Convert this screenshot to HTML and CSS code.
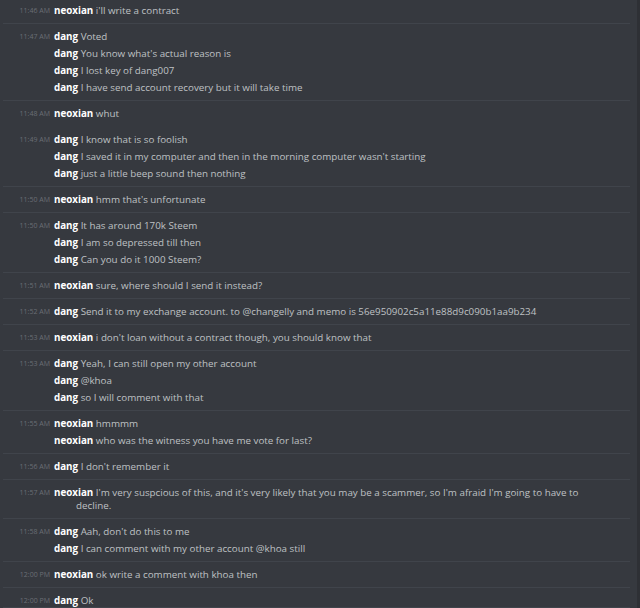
FILE: index.html
```html
<!DOCTYPE html>
<html lang="en">
<head>
  <meta charset="UTF-8">
  <title>Chat Log</title>
  <link rel="stylesheet" href="styles.css">
</head>
<body>

  <div class="window">
    <!-- Message log -->
    <div class="log">

      <div class="group">
        <div class="line"><span class="time">11:46 AM</span><p class="msg"><b class="name">neoxian</b> i'll write a contract</p></div>
      </div>

      <div class="group">
        <div class="line"><span class="time">11:47 AM</span><p class="msg"><b class="name">dang</b> Voted</p></div>
        <div class="line"><span class="time"></span><p class="msg"><b class="name">dang</b> You know what's actual reason is</p></div>
        <div class="line"><span class="time"></span><p class="msg"><b class="name">dang</b> I lost key of dang007</p></div>
        <div class="line"><span class="time"></span><p class="msg"><b class="name">dang</b> I have send account recovery but it will take time</p></div>
      </div>

      <div class="group no-rule">
        <div class="line"><span class="time">11:48 AM</span><p class="msg"><b class="name">neoxian</b> whut</p></div>
      </div>

      <div class="group">
        <div class="line"><span class="time">11:49 AM</span><p class="msg"><b class="name">dang</b> I know that is so foolish</p></div>
        <div class="line"><span class="time"></span><p class="msg"><b class="name">dang</b> I saved it in my computer and then in the morning computer wasn't starting</p></div>
        <div class="line"><span class="time"></span><p class="msg"><b class="name">dang</b> just a little beep sound then nothing</p></div>
      </div>

      <div class="group">
        <div class="line"><span class="time">11:50 AM</span><p class="msg"><b class="name">neoxian</b> hmm that's unfortunate</p></div>
      </div>

      <div class="group">
        <div class="line"><span class="time">11:50 AM</span><p class="msg"><b class="name">dang</b> It has around 170k Steem</p></div>
        <div class="line"><span class="time"></span><p class="msg"><b class="name">dang</b> I am so depressed till then</p></div>
        <div class="line"><span class="time"></span><p class="msg"><b class="name">dang</b> Can you do it 1000 Steem?</p></div>
      </div>

      <div class="group">
        <div class="line"><span class="time">11:51 AM</span><p class="msg"><b class="name">neoxian</b> sure, where should I send it instead?</p></div>
      </div>

      <div class="group">
        <div class="line"><span class="time">11:52 AM</span><p class="msg"><b class="name">dang</b> Send it to my exchange account. to @changelly and memo is 56e950902c5a11e88d9c090b1aa9b234</p></div>
      </div>

      <div class="group">
        <div class="line"><span class="time">11:53 AM</span><p class="msg"><b class="name">neoxian</b> i don't loan without a contract though, you should know that</p></div>
      </div>

      <div class="group">
        <div class="line"><span class="time">11:53 AM</span><p class="msg"><b class="name">dang</b> Yeah, I can still open my other account</p></div>
        <div class="line"><span class="time"></span><p class="msg"><b class="name">dang</b> @khoa</p></div>
        <div class="line"><span class="time"></span><p class="msg"><b class="name">dang</b> so I will comment with that</p></div>
      </div>

      <div class="group">
        <div class="line"><span class="time">11:55 AM</span><p class="msg"><b class="name">neoxian</b> hmmmm</p></div>
        <div class="line"><span class="time"></span><p class="msg"><b class="name">neoxian</b> who was the witness you have me vote for last?</p></div>
      </div>

      <div class="group">
        <div class="line"><span class="time">11:56 AM</span><p class="msg"><b class="name">dang</b> I don't remember it</p></div>
      </div>

      <div class="group">
        <div class="line"><span class="time">11:57 AM</span><p class="msg"><b class="name">neoxian</b> <span>I'm very suspcious of this, and it's very likely that you may be a scammer, so I'm afraid I'm going to have to</span><br><span>decline.</span></p></div>
      </div>

      <div class="group">
        <div class="line"><span class="time">11:58 AM</span><p class="msg"><b class="name">dang</b> Aah, don't do this to me</p></div>
        <div class="line"><span class="time"></span><p class="msg"><b class="name">dang</b> I can comment with my other account @khoa still</p></div>
      </div>

      <div class="group">
        <div class="line"><span class="time">12:00 PM</span><p class="msg"><b class="name">neoxian</b> ok write a comment with khoa then</p></div>
      </div>

      <div class="group last">
        <div class="line"><span class="time">12:00 PM</span><p class="msg"><b class="name">dang</b> Ok</p></div>
      </div>

    </div>

    <!-- Scrollbar track -->
    <div class="scrollbar"></div>
  </div>

</body>
</html>
```

FILE: styles.css
```css
:root {
  --bg-color: #36393f;
  --rule-color: #40444b;
  --text-color: #bfc1c4;
  --name-color: #ffffff;
  --time-color: #6a6e75;
  --track-color: #2e3035;
}

html, body {
  margin: 0;
  padding: 0;
  height: 100%;
  background-color: var(--bg-color);
  font-family: 'Open Sans', sans-serif;
  overflow: hidden;
}

.window {
  display: flex;
  height: 100%;
}

.log {
  flex: 1;
  padding: 0 7px 0 3px;
  margin-top: -2px;
}

.scrollbar {
  width: 3px;
  background-color: var(--track-color);
}

/* Message groups */
.group {
  padding: 4px 0;
  border-bottom: 1px solid var(--rule-color);
}

.group.no-rule {
  border-bottom-color: transparent;
}

.group.last {
  padding-bottom: 0;
}

.line {
  display: flex;
  padding: 2px 0;
  line-height: 13px;
}

.group.last .line {
  padding-bottom: 0;
}

.time {
  flex: 0 0 47px;
  text-align: right;
  font-size: 7px;
  color: var(--time-color);
  margin-right: 4px;
}

.msg {
  flex: 1;
  margin: 0 35px 0 0;
  padding-left: 22px;
  text-indent: -22px;
  font-size: 9.8px;
  color: var(--text-color);
}

.name {
  color: var(--name-color);
  font-weight: bold;
}
```
